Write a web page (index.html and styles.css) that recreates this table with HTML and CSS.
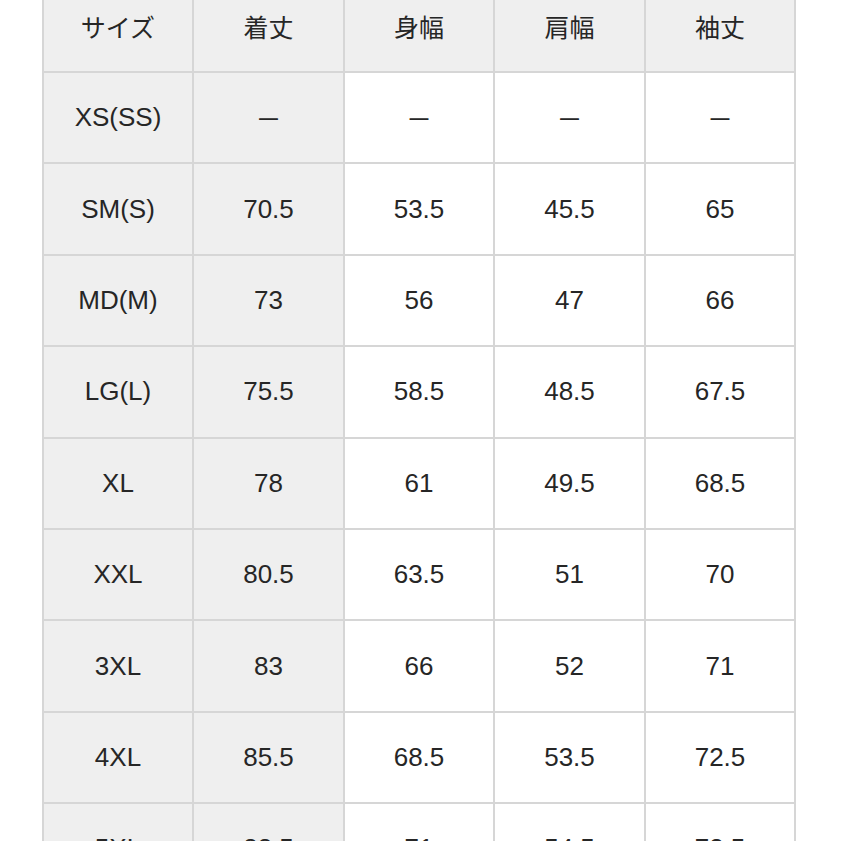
FILE: index.html
```html
<!DOCTYPE html>
<html lang="ja">
<head>
<meta charset="utf-8">
<link rel="stylesheet" href="styles.css">
</head>
<body>
<div class="page">
  <div class="grid">
    <div class="cell head">サイズ</div><div class="cell head">着丈</div><div class="cell head">身幅</div><div class="cell head">肩幅</div><div class="cell head">袖丈</div>

    <div class="cell gray">XS(SS)</div><div class="cell gray">－</div><div class="cell">－</div><div class="cell">－</div><div class="cell">－</div>
    <div class="cell gray">SM(S)</div><div class="cell gray">70.5</div><div class="cell">53.5</div><div class="cell">45.5</div><div class="cell">65</div>
    <div class="cell gray">MD(M)</div><div class="cell gray">73</div><div class="cell">56</div><div class="cell">47</div><div class="cell">66</div>
    <div class="cell gray">LG(L)</div><div class="cell gray">75.5</div><div class="cell">58.5</div><div class="cell">48.5</div><div class="cell">67.5</div>
    <div class="cell gray">XL</div><div class="cell gray">78</div><div class="cell">61</div><div class="cell">49.5</div><div class="cell">68.5</div>
    <div class="cell gray">XXL</div><div class="cell gray">80.5</div><div class="cell">63.5</div><div class="cell">51</div><div class="cell">70</div>
    <div class="cell gray">3XL</div><div class="cell gray">83</div><div class="cell">66</div><div class="cell">52</div><div class="cell">71</div>
    <div class="cell gray">4XL</div><div class="cell gray">85.5</div><div class="cell">68.5</div><div class="cell">53.5</div><div class="cell">72.5</div>
    <div class="cell gray">5XL</div><div class="cell gray">88.5</div><div class="cell">71</div><div class="cell">54.5</div><div class="cell">73.5</div>
  </div>
</div>
</body>
</html>
```

FILE: styles.css
```css
html, body {
  margin: 0;
  padding: 0;
  background: #ffffff;
  overflow: hidden;
}

.page {
  padding-left: 42px;
  margin-top: -20.4px;
}

.grid {
  display: inline-grid;
  grid-template-columns: 148px 149px 148px 149px 148px;
  grid-auto-rows: 89.4px;
  gap: 2px;
  padding: 2px;
  background: #d6d6d6;
}

.cell {
  display: flex;
  align-items: center;
  justify-content: center;
  background: #ffffff;
  color: #262626;
  font-family: "Liberation Sans", "Noto Sans CJK JP", sans-serif;
  font-size: 26px;
}

.head {
  background: #efefef;
  font-size: 25px;
}

.gray {
  background: #efefef;
}
```
